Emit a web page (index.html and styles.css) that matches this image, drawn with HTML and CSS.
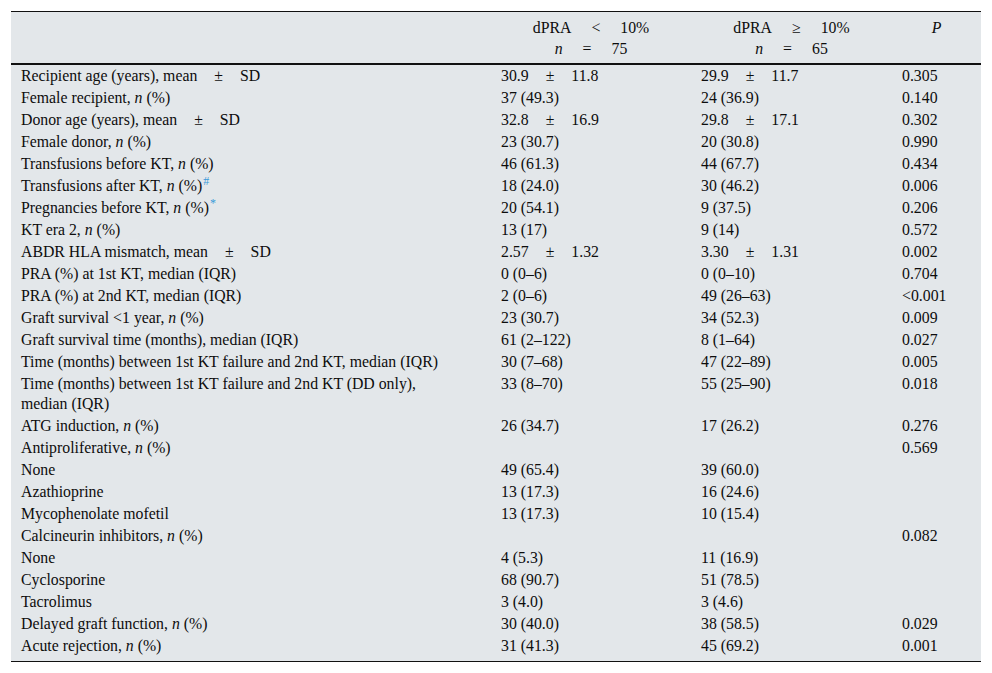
FILE: index.html
```html
<!DOCTYPE html>
<html>
<head>
<meta charset="utf-8">
<link rel="stylesheet" href="styles.css">
</head>
<body>
<table class="data">
<thead>
<tr>
<th class="c1"></th>
<th class="c2">dPRA<span class="op hop">&lt;</span>10%<br><i>n</i><span class="op hop">=</span>75</th>
<th class="c3">dPRA<span class="op hop">≥</span>10%<br><i>n</i><span class="op hop">=</span>65</th>
<th class="c4"><i>P</i></th>
</tr>
</thead>
<tbody>
<tr><td>Recipient age (years), mean<span class="op">±</span>SD</td><td>30.9<span class="op">±</span>11.8</td><td>29.9<span class="op">±</span>11.7</td><td>0.305</td></tr>
<tr><td>Female recipient, <i>n</i> (%)</td><td>37 (49.3)</td><td>24 (36.9)</td><td>0.140</td></tr>
<tr><td>Donor age (years), mean<span class="op">±</span>SD</td><td>32.8<span class="op">±</span>16.9</td><td>29.8<span class="op">±</span>17.1</td><td>0.302</td></tr>
<tr><td>Female donor, <i>n</i> (%)</td><td>23 (30.7)</td><td>20 (30.8)</td><td>0.990</td></tr>
<tr><td>Transfusions before KT, <i>n</i> (%)</td><td>46 (61.3)</td><td>44 (67.7)</td><td>0.434</td></tr>
<tr><td>Transfusions after KT, <i>n</i> (%)<sup class="note">#</sup></td><td>18 (24.0)</td><td>30 (46.2)</td><td>0.006</td></tr>
<tr><td>Pregnancies before KT, <i>n</i> (%)<sup class="note">*</sup></td><td>20 (54.1)</td><td>9 (37.5)</td><td>0.206</td></tr>
<tr><td>KT era 2, <i>n</i> (%)</td><td>13 (17)</td><td>9 (14)</td><td>0.572</td></tr>
<tr><td>ABDR HLA mismatch, mean<span class="op">±</span>SD</td><td>2.57<span class="op">±</span>1.32</td><td>3.30<span class="op">±</span>1.31</td><td>0.002</td></tr>
<tr><td>PRA (%) at 1st KT, median (IQR)</td><td>0 (0–6)</td><td>0 (0–10)</td><td>0.704</td></tr>
<tr><td>PRA (%) at 2nd KT, median (IQR)</td><td>2 (0–6)</td><td>49 (26–63)</td><td>&lt;0.001</td></tr>
<tr><td>Graft survival &lt;1 year, <i>n</i> (%)</td><td>23 (30.7)</td><td>34 (52.3)</td><td>0.009</td></tr>
<tr><td>Graft survival time (months), median (IQR)</td><td>61 (2–122)</td><td>8 (1–64)</td><td>0.027</td></tr>
<tr><td>Time (months) between 1st KT failure and 2nd KT, median (IQR)</td><td>30 (7–68)</td><td>47 (22–89)</td><td>0.005</td></tr>
<tr><td>Time (months) between 1st KT failure and 2nd KT (DD only),<br>median (IQR)</td><td>33 (8–70)</td><td>55 (25–90)</td><td>0.018</td></tr>
<tr><td>ATG induction, <i>n</i> (%)</td><td>26 (34.7)</td><td>17 (26.2)</td><td>0.276</td></tr>
<tr><td>Antiproliferative, <i>n</i> (%)</td><td></td><td></td><td>0.569</td></tr>
<tr><td>None</td><td>49 (65.4)</td><td>39 (60.0)</td><td></td></tr>
<tr><td>Azathioprine</td><td>13 (17.3)</td><td>16 (24.6)</td><td></td></tr>
<tr><td>Mycophenolate mofetil</td><td>13 (17.3)</td><td>10 (15.4)</td><td></td></tr>
<tr><td>Calcineurin inhibitors, <i>n</i> (%)</td><td></td><td></td><td>0.082</td></tr>
<tr><td>None</td><td>4 (5.3)</td><td>11 (16.9)</td><td></td></tr>
<tr><td>Cyclosporine</td><td>68 (90.7)</td><td>51 (78.5)</td><td></td></tr>
<tr><td>Tacrolimus</td><td>3 (4.0)</td><td>3 (4.6)</td><td></td></tr>
<tr><td>Delayed graft function, <i>n</i> (%)</td><td>30 (40.0)</td><td>38 (58.5)</td><td>0.029</td></tr>
<tr class="last"><td>Acute rejection, <i>n</i> (%)</td><td>31 (41.3)</td><td>45 (69.2)</td><td>0.001</td></tr>
</tbody>
</table>
</body>
</html>
```
FILE: styles.css
```css
html, body {
  margin: 0;
  padding: 0;
  background: #ffffff;
}
body {
  padding: 11px 11px 0 11px;
  font-family: "Liberation Serif", "Times New Roman", serif;
  font-size: 15.8px;
  color: #0d0d0d;
}
.data {
  width: 970px;
  table-layout: fixed;
  border-collapse: collapse;
  background: #e3e7ea;
  border-top: 1px solid #111;
  border-bottom: 1px solid #111;
}
.data th,
.data td {
  box-sizing: border-box;
  padding-left: 10px;
  padding-right: 10px;
}
.data .c1 { width: 480px; }
.data .c2 { width: 200px; }
.data .c3 { width: 201px; }
.data .c4 { width: 89px; }
.data th {
  font-weight: normal;
  text-align: center;
  vertical-align: top;
  line-height: 21px;
  padding-top: 5px;
  padding-bottom: 4px;
  border-bottom: 2px solid #111;
}
.data td {
  padding-top: 1px;
  padding-bottom: 1px;
  line-height: 20px;
  vertical-align: top;
  text-align: left;
  white-space: nowrap;
}
.data tr.last td {
  padding-bottom: 5px;
}
.op {
  margin: 0 17px;
}
.hop {
  margin: 0 20px;
}
.note {
  color: #3a9ad9;
  font-size: 12px;
  line-height: 0;
  margin-left: 1px;
  vertical-align: 6px;
}
```
